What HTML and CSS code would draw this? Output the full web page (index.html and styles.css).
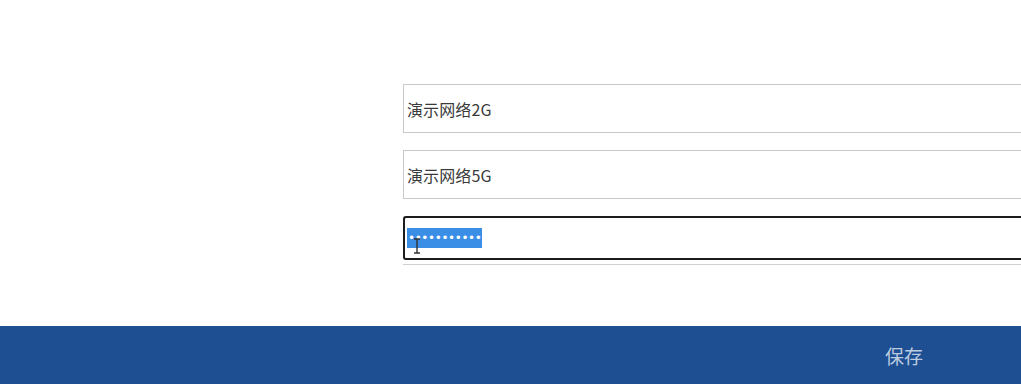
FILE: index.html
```html
<!DOCTYPE html>
<html lang="zh">
<head>
<meta charset="utf-8">
<title>Wi-Fi</title>
<link rel="stylesheet" href="styles.css">
</head>
<body>
<div class="page">
  <main class="content">
    <div class="fields">
      <div class="field"><span class="value">演示网络2G</span></div>
      <div class="field"><span class="value">演示网络5G</span></div>
      <div class="field field-focus">
        <div class="focus-ring">
          <span class="selected">•••••••••••</span>
          <svg class="ibeam" width="8" height="16" viewBox="0 0 8 16"><path d="M1 1h6M4 1v14M1 15h6" stroke="#333" stroke-width="1.4" fill="none"/></svg>
        </div>
      </div>
    </div>
  </main>
  <footer class="footer">
    <span class="save">保存</span>
  </footer>
</div>
</body>
</html>
```
FILE: styles.css
```css
html, body {
  margin: 0;
  padding: 0;
  background: #ffffff;
  overflow: hidden;
}
.page {
  width: 1021px;
  height: 384px;
  display: flex;
  flex-direction: column;
  font-family: "Noto Sans CJK SC", "Noto Sans", sans-serif;
}
.content {
  height: 326px;
  overflow: hidden;
}
.fields {
  padding: 84px 0 0 403px;
  display: flex;
  flex-direction: column;
  gap: 17px;
}
.field {
  width: 700px;
  height: 49px;
  box-sizing: border-box;
  border: 1px solid #c9c9c9;
  border-right: none;
  display: flex;
  align-items: center;
  padding-left: 3px;
}
.value {
  font-size: 16px;
  color: #3a3a3a;
  letter-spacing: 0.1px;
}
.field-focus {
  border: none;
  border-bottom: 1px solid #cfcfcf;
  padding: 0;
  align-items: flex-start;
}
.focus-ring {
  position: relative;
  width: 100%;
  height: 44px;
  box-sizing: border-box;
  border: 2px solid #1c1c1c;
  border-right: none;
  border-radius: 3px 0 0 3px;
  display: flex;
  align-items: center;
  padding-left: 2px;
}
.selected {
  background: #3b8ee6;
  color: #ffffff;
  font-family: "DejaVu Sans", sans-serif;
  font-size: 12px;
  line-height: 20px;
  letter-spacing: -0.4px;
  padding: 0 1px;
}
.ibeam {
  position: absolute;
  left: 8px;
  top: 20px;
}
.footer {
  height: 58px;
  background: #1e4f92;
  display: flex;
  align-items: center;
  justify-content: flex-end;
  padding-right: 98px;
}
.save {
  font-size: 19px;
  color: #bccbe0;
}
```
